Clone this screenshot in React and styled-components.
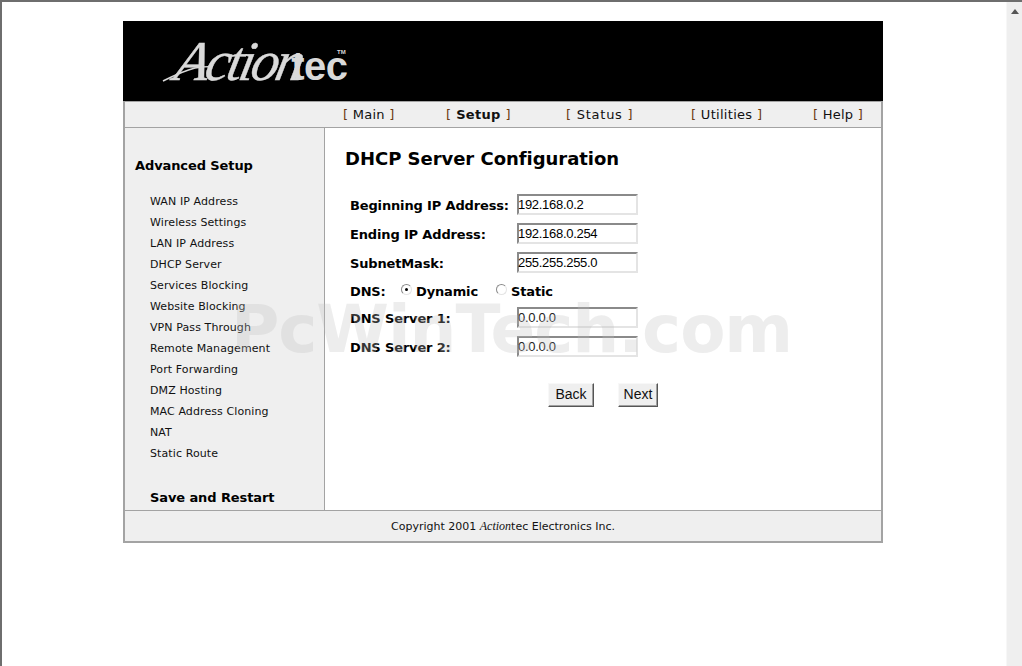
import React from 'react';
import styled, { createGlobalStyle } from 'styled-components';

const Global = createGlobalStyle`
  html, body { margin: 0; padding: 0; height: 100%; overflow: hidden; background: #fff; }
  #root { height: 100%; }
`;
const Viewport = styled.div`
  position: relative; width: 1022px; height: 666px; box-sizing: border-box; overflow: hidden;
  background: #fff; border-top: 2px solid #6e6e6e; border-left: 2px solid #6e6e6e;
  font-family: "DejaVu Sans", Verdana, sans-serif; color: #000;
`;
const Scrollbar = styled.div`
  position: absolute; top: 0; right: 0; bottom: 0; width: 16px; background: #efefef;
  border-left: 1px solid #f7f7f7; display: flex; justify-content: center; padding-top: 7px; box-sizing: border-box;
`;
const Frame = styled.div`
  position: absolute; left: 121px; top: 19px; width: 760px;
`;
const Banner = styled.div`
  position: relative; height: 80px; background: #000; overflow: hidden;
`;
const Logo = styled.div`
  position: absolute; left: 46px; top: 5px; display: flex; align-items: baseline; color: #d9d9d9; white-space: nowrap;
`;
const LogoScript = styled.span`
  font: italic 400 56px/70px "Liberation Serif", serif; letter-spacing: -3.5px; -webkit-text-stroke: 0.4px #d9d9d9;
  display: inline-block; transform: skewX(-12deg); transform-origin: bottom left;
`;
const LogoBold = styled.span`
  font: 700 40px/30px "Liberation Sans", Arial, sans-serif; letter-spacing: -0.5px; margin-left: -3px;
`;
const Swoosh = styled.svg`
  position: absolute; left: 38px; top: 20px;
`;
const LogoMark = styled.span`
  position: absolute; left: 214px; top: 27px; font: 700 6px/8px "Liberation Sans", Arial, sans-serif; color: #d9d9d9;
`;
const Shell = styled.div`
  border: 2px solid #a3a3a3; border-top: 0; 
`;
const NavBar = styled.div`
  position: relative; height: 25px; background: #efefef; border-top: 1px solid #a3a3a3; border-bottom: 1px solid #a3a3a3;
`;
const NavItem = styled.span`
  position: absolute; left: ${p => p.$x}px; top: 5px; font-size: 13px; line-height: 16px; white-space: nowrap;
  letter-spacing: ${p => p.$track || 0.25}px; font-weight: ${p => (p.$active ? 700 : 400)}; color: #111;
`;
const Bracket = styled.span`
  color: #6b3a10; font-weight: 400;
`;
const Body = styled.div`
  display: flex; height: 382px;
`;
const Sidebar = styled.div`
  width: 199px; flex: none; background: #efefef; border-right: 1px solid #a3a3a3; position: relative; overflow: hidden;
`;
const SideTitle = styled.div`
  position: absolute; left: ${p => p.$x}px; top: ${p => p.$y}px; font-size: 13px; font-weight: 700; line-height: 16px; white-space: nowrap; letter-spacing: -0.1px;
`;
const SideList = styled.ul`
  position: absolute; left: 25px; top: 63px; margin: 0; padding: 0; list-style: none;
`;
const SideItem = styled.li`
  height: 21px; line-height: 21px; font-size: 11px; white-space: nowrap; color: #111; letter-spacing: 0.1px;
`;
const Main = styled.div`
  position: relative; flex: 1; background: #fff;
`;
const Title = styled.h1`
  position: absolute; left: 20px; top: 19px; margin: 0; font-size: 18px; line-height: 24px; font-weight: 700; white-space: nowrap; letter-spacing: -0.03px;
`;
const Label = styled.label`
  position: absolute; left: ${p => p.$x || 25}px; top: ${p => p.$y}px; font-size: 13px; line-height: 16px; font-weight: 700; white-space: nowrap; letter-spacing: -0.15px;
`;
const Field = styled.div`
  position: absolute; left: 192px; top: ${p => p.$y}px; width: 121px; height: 21px; box-sizing: border-box;
  border: 2px solid; border-color: #8a8a8a #e4e4e4 #e4e4e4 #8a8a8a; background: #fff;
  font: 13px/17px "Liberation Sans", Arial, sans-serif; letter-spacing: -0.3px; text-indent: -1px; color: ${p => (p.$dim ? '#222' : '#000')}; white-space: nowrap;
`;
const Radio = styled.span`
  position: absolute; left: ${p => p.$x}px; top: ${p => p.$y}px; width: 11px; height: 11px; box-sizing: border-box;
  border-radius: 50%; border: 1px solid; border-color: #8a8a8a #e4e4e4 #e4e4e4 #8a8a8a; background: #fff;
  &::after { content: ""; display: ${p => (p.$on ? 'block' : 'none')}; width: 3px; height: 3px; border-radius: 50%; background: #000; margin: 3px; }
`;
const Button = styled.div`
  position: absolute; left: ${p => p.$x}px; top: 255px; width: ${p => p.$w}px; height: 24px; box-sizing: border-box;
  background: #efefef; border: 1px solid; border-color: #f8f8f8 #555 #555 #f8f8f8;
  box-shadow: inset -1px -1px 0 #a0a0a0;
  font: 14px/21px "Liberation Sans", Arial, sans-serif; text-align: center; color: #111;
`;
const Footer = styled.div`
  height: 30px; background: #efefef; border-top: 1px solid #a3a3a3; font-size: 11px; line-height: 30px; text-align: center; color: #111;
`;
const FooterScript = styled.em`
  font-family: "Liberation Serif", serif; font-size: 12px;
`;
const Watermark = styled.div`
  position: absolute; left: 229px; top: 293px; font: 700 66px/70px "DejaVu Sans", Verdana, sans-serif; letter-spacing: -1.1px;
  color: rgba(190,190,190,0.28); white-space: nowrap; pointer-events: none; z-index: 5;
`;

const nav = [['Main', 218], ['Setup', 321, true, 0.3], ['Status', 441, false, 0.75], ['Utilities', 566, false, 0.3], ['Help', 688]];
const items = ['WAN IP Address','Wireless Settings','LAN IP Address','DHCP Server','Services Blocking','Website Blocking','VPN Pass Through','Remote Management','Port Forwarding','DMZ Hosting','MAC Address Cloning','NAT','Static Route'];

export default function App() {
  return (
    <Viewport>
      <Global />
      <Frame>
        <Banner>
          <Logo>
            <LogoScript>Action</LogoScript>
            <LogoBold>tec</LogoBold>
          </Logo>
          <Swoosh width="70" height="42" viewBox="0 0 70 42">
            <path d="M2 40C14 34 22 30 34 27C40 26 46 25.500 52 25.500" fill="none" stroke="#d9d9d9" strokeWidth="1.600" />
          </Swoosh>
          <LogoMark>TM</LogoMark>
        </Banner>
        <Shell>
          <NavBar>
            {nav.map(([t, x, a, tr]) => (
              <NavItem key={t} $x={x} $active={a} $track={tr}><Bracket>[</Bracket> {t} <Bracket>]</Bracket></NavItem>
            ))}
          </NavBar>
          <Body>
            <Sidebar>
              <SideTitle $x={10} $y={30}>Advanced Setup</SideTitle>
              <SideList>{items.map(i => <SideItem key={i}>{i}</SideItem>)}</SideList>
              <SideTitle $x={25} $y={362}>Save and Restart</SideTitle>
            </Sidebar>
            <Main>
              <Title>DHCP Server Configuration</Title>
              <Label $y={70}>Beginning IP Address:</Label>
              <Field $y={66}>192.168.0.2</Field>
              <Label $y={99}>Ending IP Address:</Label>
              <Field $y={95}>192.168.0.254</Field>
              <Label $y={128}>SubnetMask:</Label>
              <Field $y={124}>255.255.255.0</Field>
              <Label $y={156}>DNS:</Label>
              <Radio $x={76} $y={156} $on />
              <Label $x={91} $y={156}>Dynamic</Label>
              <Radio $x={171} $y={156} />
              <Label $x={186} $y={156}>Static</Label>
              <Label $y={183}>DNS Server 1:</Label>
              <Field $y={179} $dim>0.0.0.0</Field>
              <Label $y={212}>DNS Server 2:</Label>
              <Field $y={208} $dim>0.0.0.0</Field>
              <Button $x={223} $w={46}>Back</Button>
              <Button $x={293} $w={40}>Next</Button>
            </Main>
          </Body>
          <Footer>Copyright 2001 <FooterScript>Action</FooterScript>tec Electronics Inc.</Footer>
        </Shell>
      </Frame>
      <Watermark>PcWinTech.com</Watermark>
      <Scrollbar>
        <svg width="8" height="5" viewBox="0 0 8 5"><path d="M4 0L8 5H0Z" fill="#555" /></svg>
      </Scrollbar>
    </Viewport>
  );
}
